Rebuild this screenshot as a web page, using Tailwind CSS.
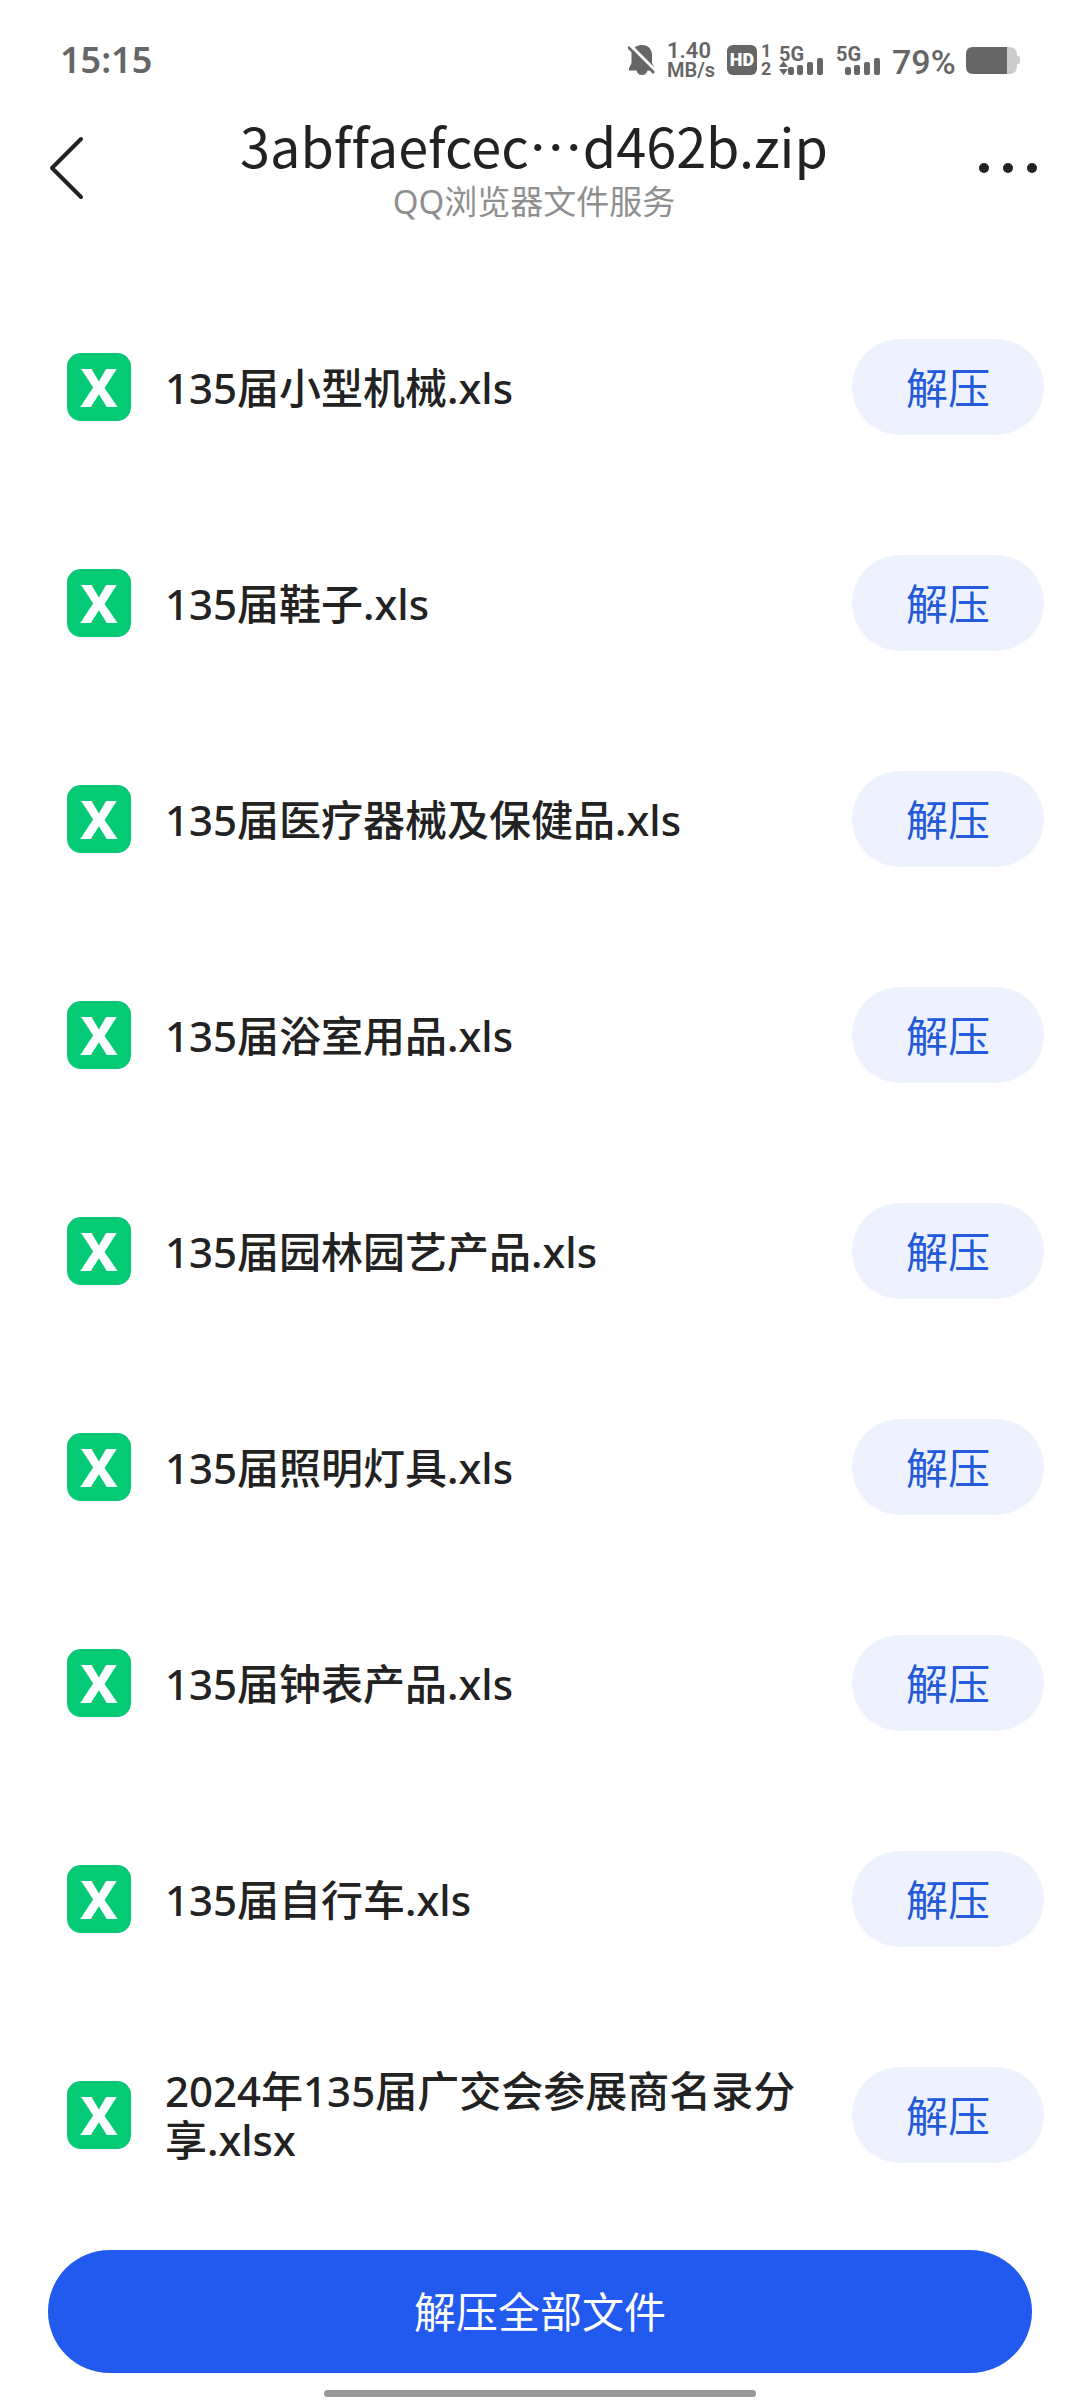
<!DOCTYPE html>
<html lang="zh-CN">
  <head>
    <meta charset="UTF-8" />
    <meta name="viewport" content="width=device-width, initial-scale=1.0" />
    <script src="https://cdn.jsdelivr.net/npm/@tailwindcss/browser@4"></script>
    <title>QQ浏览器文件服务</title>
  </head>
  <body
    class="bg-white text-[#222222] min-h-screen flex flex-col font-['Noto_Sans','Noto_Sans_CJK_SC',sans-serif]"
  >
    <!-- status bar -->
    <div
      class="h-[120px] shrink-0 pl-[60px] pr-[60px] flex items-center justify-between text-[#666666]"
    >
      <span class="text-[36px] leading-[40px] font-semibold">15:15</span>
      <div class="flex items-center font-['Roboto','Noto_Sans',sans-serif]">
        <svg class="w-[27px] h-[30px] mr-3" viewBox="0 0 27 30" fill="currentColor">
          <path
            d="M4 6 C6 2 10 0 14 0 C20 0 24 4 24 10 V18 L27 24 V25.500 H19.500 C19 28 17 30 14 30 C11 30 9 28 8.500 25.500 H1 V23 L3.500 18 V10 C3.500 8 3.500 7 4 6 Z"
          />
          <path d="M2 0 L27 25" stroke="#ffffff" stroke-width="3" />
          <path d="M0 2 L26 28" stroke="currentColor" stroke-width="2.500" />
        </svg>
        <div class="w-[48px] mr-3 flex flex-col font-semibold">
          <span class="text-[22px] leading-[20px]">1.40</span>
          <span class="text-[20px] leading-[18px]">MB/s</span>
        </div>
        <span
          class="w-[30px] h-[30px] rounded-md bg-[#666666] text-white text-[18px] leading-[30px] text-center font-black"
          >HD</span
        >
        <div
          class="w-[20px] mr-0.5 pl-1 flex flex-col text-[18px] leading-[18px] font-bold"
        >
          <span>1</span>
          <span>2</span>
        </div>
        <div class="w-[57px] flex flex-col">
          <span class="text-[20px] leading-[16px] font-bold">5G</span>
          <svg class="w-[45px] h-[17px] -mt-1" viewBox="0 0 45 17" fill="currentColor">
            <path d="M0 9 L4.500 3 L9 9 Z M0 11 L4.500 17 L9 11 Z" />
            <rect x="9" y="9" width="6" height="8" rx="2" />
            <rect x="18" y="7" width="6" height="10" rx="2" />
            <rect x="28" y="4" width="6" height="13" rx="2" />
            <rect x="38" y="0" width="6" height="17" rx="2" />
          </svg>
        </div>
        <div class="w-[56px] flex flex-col">
          <span class="text-[20px] leading-[16px] font-bold">5G</span>
          <svg class="w-[45px] h-[17px] -mt-1" viewBox="0 0 45 17" fill="currentColor">
            <rect x="9" y="9" width="6" height="8" rx="2" />
            <rect x="18" y="7" width="6" height="10" rx="2" />
            <rect x="28" y="4" width="6" height="13" rx="2" />
            <rect x="38" y="0" width="6" height="17" rx="2" />
          </svg>
        </div>
        <span class="w-[66px] mr-2 pt-1 text-[34px] leading-[40px] font-medium">79%</span>
        <svg class="w-[54px] h-[27px]" viewBox="0 0 54 27">
          <path
            d="M40 0 H43 Q51 0 51 8 V9 H52 Q54 9 54 11 V15 Q54 17 52 17 H51 V19 Q51 27 43 27 H40 Z"
            fill="#cccccc"
          />
          <path d="M7 0 H41 V27 H7 Q0 27 0 20 V7 Q0 0 7 0 Z" fill="#666666" />
        </svg>
      </div>
    </div>

    <!-- title bar -->
    <header class="h-[159px] shrink-0 pl-[48px] pr-[40px] flex items-start">
      <button type="button" aria-label="返回" class="w-[90px] h-[96px] flex items-center">
        <svg
          class="w-[38px] h-[64px]"
          viewBox="0 0 38 64"
          fill="none"
          stroke="currentColor"
          stroke-width="4"
          stroke-linecap="round"
          stroke-linejoin="round"
        >
          <path d="M33 3 L4 32 L33 61" />
        </svg>
      </button>
      <div class="flex-1 min-w-0 flex flex-col items-center">
        <h1
          class="text-[54px] leading-[50px] whitespace-nowrap [font-variant-ligatures:none] font-['Noto_Sans_CJK_SC',sans-serif]"
        >
          3abffaefcec…d462b.zip
        </h1>
        <p class="mt-2 text-[33px] leading-[48px] text-[#8f8f8f]">QQ浏览器文件服务</p>
      </div>
      <button
        type="button"
        aria-label="更多"
        class="w-[110px] h-[96px] flex items-center justify-end"
      >
        <svg class="w-[62px] h-[12px]" viewBox="0 0 62 12" fill="currentColor">
          <circle cx="6" cy="6" r="5" />
          <circle cx="30" cy="6" r="5" />
          <circle cx="54" cy="6" r="5" />
        </svg>
      </button>
    </header>

    <!-- file list -->
    <ul class="flex-1 pl-[67px] pr-[36px] text-[42px] leading-[49px]">
      <li class="h-[216px] flex items-center">
        <span
          class="w-[64px] h-[68px] shrink-0 rounded-[14px] bg-[#04c975] text-white text-[54px] leading-[66px] font-extrabold text-center"
          aria-hidden="true"
          >X</span
        >
        <p class="flex-1 ml-[34px] mr-[40px] font-medium">135届小型机械.xls</p>
        <button
          type="button"
          class="w-[192px] h-[96px] shrink-0 rounded-full bg-[#eef2ff] text-[#2459d9]"
        >
          解压
        </button>
      </li>
      <li class="h-[216px] flex items-center">
        <span
          class="w-[64px] h-[68px] shrink-0 rounded-[14px] bg-[#04c975] text-white text-[54px] leading-[66px] font-extrabold text-center"
          aria-hidden="true"
          >X</span
        >
        <p class="flex-1 ml-[34px] mr-[40px] font-medium">135届鞋子.xls</p>
        <button
          type="button"
          class="w-[192px] h-[96px] shrink-0 rounded-full bg-[#eef2ff] text-[#2459d9]"
        >
          解压
        </button>
      </li>
      <li class="h-[216px] flex items-center">
        <span
          class="w-[64px] h-[68px] shrink-0 rounded-[14px] bg-[#04c975] text-white text-[54px] leading-[66px] font-extrabold text-center"
          aria-hidden="true"
          >X</span
        >
        <p class="flex-1 ml-[34px] mr-[40px] font-medium">135届医疗器械及保健品.xls</p>
        <button
          type="button"
          class="w-[192px] h-[96px] shrink-0 rounded-full bg-[#eef2ff] text-[#2459d9]"
        >
          解压
        </button>
      </li>
      <li class="h-[216px] flex items-center">
        <span
          class="w-[64px] h-[68px] shrink-0 rounded-[14px] bg-[#04c975] text-white text-[54px] leading-[66px] font-extrabold text-center"
          aria-hidden="true"
          >X</span
        >
        <p class="flex-1 ml-[34px] mr-[40px] font-medium">135届浴室用品.xls</p>
        <button
          type="button"
          class="w-[192px] h-[96px] shrink-0 rounded-full bg-[#eef2ff] text-[#2459d9]"
        >
          解压
        </button>
      </li>
      <li class="h-[216px] flex items-center">
        <span
          class="w-[64px] h-[68px] shrink-0 rounded-[14px] bg-[#04c975] text-white text-[54px] leading-[66px] font-extrabold text-center"
          aria-hidden="true"
          >X</span
        >
        <p class="flex-1 ml-[34px] mr-[40px] font-medium">135届园林园艺产品.xls</p>
        <button
          type="button"
          class="w-[192px] h-[96px] shrink-0 rounded-full bg-[#eef2ff] text-[#2459d9]"
        >
          解压
        </button>
      </li>
      <li class="h-[216px] flex items-center">
        <span
          class="w-[64px] h-[68px] shrink-0 rounded-[14px] bg-[#04c975] text-white text-[54px] leading-[66px] font-extrabold text-center"
          aria-hidden="true"
          >X</span
        >
        <p class="flex-1 ml-[34px] mr-[40px] font-medium">135届照明灯具.xls</p>
        <button
          type="button"
          class="w-[192px] h-[96px] shrink-0 rounded-full bg-[#eef2ff] text-[#2459d9]"
        >
          解压
        </button>
      </li>
      <li class="h-[216px] flex items-center">
        <span
          class="w-[64px] h-[68px] shrink-0 rounded-[14px] bg-[#04c975] text-white text-[54px] leading-[66px] font-extrabold text-center"
          aria-hidden="true"
          >X</span
        >
        <p class="flex-1 ml-[34px] mr-[40px] font-medium">135届钟表产品.xls</p>
        <button
          type="button"
          class="w-[192px] h-[96px] shrink-0 rounded-full bg-[#eef2ff] text-[#2459d9]"
        >
          解压
        </button>
      </li>
      <li class="h-[216px] flex items-center">
        <span
          class="w-[64px] h-[68px] shrink-0 rounded-[14px] bg-[#04c975] text-white text-[54px] leading-[66px] font-extrabold text-center"
          aria-hidden="true"
          >X</span
        >
        <p class="flex-1 ml-[34px] mr-[40px] font-medium">135届自行车.xls</p>
        <button
          type="button"
          class="w-[192px] h-[96px] shrink-0 rounded-full bg-[#eef2ff] text-[#2459d9]"
        >
          解压
        </button>
      </li>
      <li class="h-[216px] flex items-center">
        <span
          class="w-[64px] h-[68px] shrink-0 rounded-[14px] bg-[#04c975] text-white text-[54px] leading-[66px] font-extrabold text-center"
          aria-hidden="true"
          >X</span
        >
        <p class="flex-1 ml-[34px] mr-[40px] font-medium">2024年135届广交会参展商名录分享.xlsx</p>
        <button
          type="button"
          class="w-[192px] h-[96px] shrink-0 rounded-full bg-[#eef2ff] text-[#2459d9]"
        >
          解压
        </button>
      </li>
    </ul>

    <!-- bottom action -->
    <footer class="shrink-0 px-[48px] pb-[3px] flex flex-col items-center">
      <button
        type="button"
        class="w-full h-[123px] rounded-full bg-[#225aef] text-white text-[42px] leading-[49px]"
      >
        解压全部文件
      </button>
      <div class="mt-[17px] w-[432px] h-[7px] rounded-full bg-[#999999]"></div>
    </footer>
  </body>
</html>
